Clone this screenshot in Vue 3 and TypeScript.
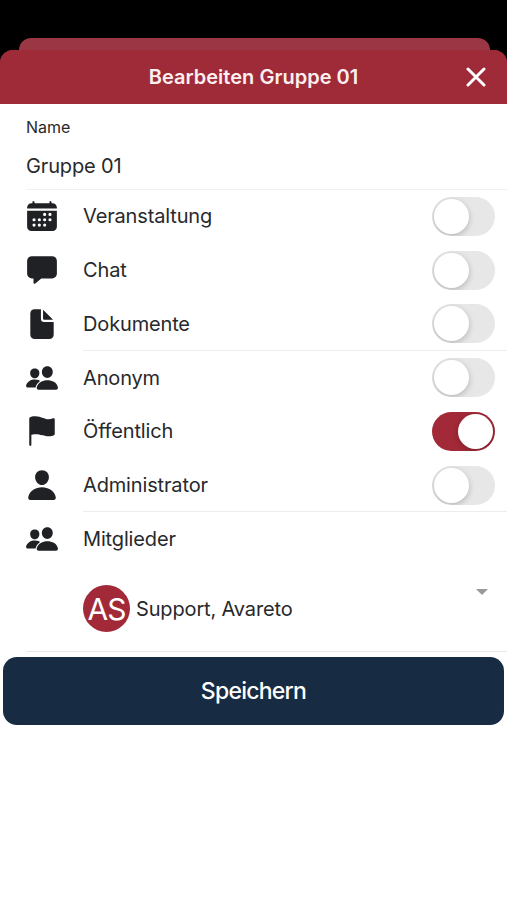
<script setup lang="ts">
import { ref } from 'vue'

type IconName = 'calendar' | 'chat' | 'document' | 'people' | 'flag' | 'person'

interface Option {
  label: string
  icon: IconName
  enabled: boolean
}

const icons: Record<IconName, string> = {
  calendar:
    'M480 128a64 64 0 00-64-64h-16V48.45c0-8.61-6.62-16-15.23-16.43A16 16 0 00368 48v16H144V48.45c0-8.61-6.62-16-15.23-16.43A16 16 0 00112 48v16H96a64 64 0 00-64 64v12a4 4 0 004 4h440a4 4 0 004-4zM32 416a64 64 0 0064 64h320a64 64 0 0064-64V179a3 3 0 00-3-3H35a3 3 0 00-3 3zM376 208a24 24 0 110 48 24 24 0 010-48zM376 288a24 24 0 110 48 24 24 0 010-48zM296 208a24 24 0 110 48 24 24 0 010-48zM296 288a24 24 0 110 48 24 24 0 010-48zM296 368a24 24 0 110 48 24 24 0 010-48zM216 288a24 24 0 110 48 24 24 0 010-48zM216 368a24 24 0 110 48 24 24 0 010-48zM136 288a24 24 0 110 48 24 24 0 010-48zM136 368a24 24 0 110 48 24 24 0 010-48z',
  chat: 'M408 48H104a72 72 0 00-72 72v192a72 72 0 0072 72h24v64a16 16 0 0026.25 12.29L245.74 384H408a72 72 0 0072-72V120a72 72 0 00-72-72z',
  document:
    'M428 224H288a48 48 0 01-48-48V36a4 4 0 00-4-4h-92a64 64 0 00-64 64v320a64 64 0 0064 64h224a64 64 0 0064-64V228a4 4 0 00-4-4zM419.22 188.59L275.41 44.78a2 2 0 00-3.41 1.41V176a16 16 0 0016 16h129.81a2 2 0 001.41-3.41z',
  people:
    'M336 256c-20.56 0-40.44-9.18-56-25.84-15.13-16.25-24.37-37.92-26-61-1.74-24.62 5.77-47.26 21.14-63.76S312 80 336 80c23.83 0 45.38 9.06 60.7 25.52 15.47 16.62 23 39.22 21.26 63.63-1.67 23.11-10.9 44.77-26 61C376.44 246.82 356.57 256 336 256zM467.83 432H204.18a27.71 27.71 0 01-22-10.67 30.22 30.22 0 01-5.26-25.79c8.42-33.81 29.28-61.85 60.32-81.08C264.79 297.4 299.86 288 336 288c36.85 0 71 9 98.71 26.05 31.11 19.13 52 47.33 60.38 81.55a30.27 30.27 0 01-5.32 25.78A27.68 27.68 0 01467.83 432zM147 260c-35.19 0-66.13-32.72-69-72.93-1.42-20.6 5-39.65 18-53.62 12.86-13.83 31-21.45 51-21.45s38 7.66 50.93 21.57c13.1 14.08 19.5 33.09 18 53.52-2.87 40.2-33.8 72.91-68.93 72.91zM212.66 291.45c-17.59-8.6-40.42-12.9-65.65-12.9-29.46 0-58.07 7.68-80.57 21.62-25.51 15.83-42.67 38.88-49.6 66.71a27.39 27.39 0 004.79 23.36A25.32 25.32 0 0041.72 400h111a8 8 0 007.87-6.57c.11-.63.25-1.26.41-1.88 8.48-34.06 28.35-62.84 57.71-83.82a8 8 0 00-.63-13.39c-1.57-.92-3.37-1.89-5.42-2.89z',
  flag: 'M80 480a16 16 0 01-16-16V68.13a24 24 0 0111.88-20.72C88 40.38 112.38 32 160 32c37.21 0 78.83 14.71 115.55 27.68C305.12 70.13 333.05 80 352 80a183.84 183.84 0 0071-14.5 18 18 0 0125 16.58v219.36a20 20 0 01-12 18.31c-8.71 3.81-40.51 16.25-84 16.25-24.14 0-54.38-7.14-86.39-14.71C229.63 312.79 192.43 304 160 304c-36.87 0-55.74 5.58-64 9.11V464a16 16 0 01-16 16z',
  person:
    'M332.64 64.58C313.18 43.57 286 32 256 32c-30.16 0-57.43 11.5-76.8 32.38-19.58 21.11-29.12 49.8-26.88 80.78C156.76 206.28 203.27 256 256 256s99.16-49.71 103.67-110.82c2.27-30.7-7.33-59.33-27.03-80.6zM432 480H80a31 31 0 01-24.2-11.13c-6.5-7.77-9.12-18.38-7.18-29.11C57.06 392.94 83.4 353.61 124.8 326c36.78-24.51 83.37-38 131.2-38s94.42 13.5 131.2 38c41.4 27.6 67.74 66.93 76.18 113.75 1.94 10.73-.68 21.34-7.18 29.11A31 31 0 01432 480z',
}

const groupName = ref('Gruppe 01')

const sections = ref<Option[][]>([
  [
    { label: 'Veranstaltung', icon: 'calendar', enabled: false },
    { label: 'Chat', icon: 'chat', enabled: false },
    { label: 'Dokumente', icon: 'document', enabled: false },
  ],
  [
    { label: 'Anonym', icon: 'people', enabled: false },
    { label: 'Öffentlich', icon: 'flag', enabled: true },
    { label: 'Administrator', icon: 'person', enabled: false },
  ],
])
</script>

<template>
  <div class="screen">
    <div class="sheet-behind"></div>
    <main class="sheet">
      <header class="toolbar">
        <h1 class="title">Bearbeiten Gruppe 01</h1>
        <button class="close" type="button">
          <svg viewBox="0 0 20 20"><path d="M2 2L18 18M18 2L2 18" /></svg>
        </button>
      </header>

      <label class="name">
        <span class="name-label">Name</span>
        <span class="name-value">{{ groupName }}</span>
      </label>

      <section v-for="(section, i) in sections" :key="i" class="section">
        <div v-for="option in section" :key="option.label" class="row">
          <svg class="icon" viewBox="0 0 512 512">
            <path fill-rule="evenodd" :d="icons[option.icon]" />
          </svg>
          <span class="label">{{ option.label }}</span>
          <button
            type="button"
            role="switch"
            class="toggle"
            :class="{ on: option.enabled }"
            :aria-checked="option.enabled"
            @click="option.enabled = !option.enabled"
          >
            <span class="knob"></span>
          </button>
        </div>
      </section>

      <section class="members">
        <div class="row">
          <svg class="icon" viewBox="0 0 512 512"><path :d="icons.people" /></svg>
          <span class="label">Mitglieder</span>
        </div>
        <div class="member">
          <span class="avatar">AS</span>
          <span class="member-name">Support, Avareto</span>
          <span class="caret"></span>
        </div>
      </section>

      <button class="save" type="button">Speichern</button>
    </main>
  </div>
</template>

<style>
body {
  margin: 0;
  background: #000;
}
</style>

<style scoped>
.screen {
  box-sizing: border-box;
  display: flex;
  flex-direction: column;
  height: 900px;
  padding-top: 38px;
  overflow: hidden;
  background: #000;
  color: #27292c;
  font-family: Inter, 'Liberation Sans', sans-serif;
  font-size: 20px;
  letter-spacing: -0.15px;
}
button {
  padding: 0;
  border: 0;
  font-family: inherit;
}
.sheet-behind {
  flex: none;
  height: 12px;
  margin: 0 17.5px 0 18.5px;
  border-radius: 12px 12px 0 0;
  background: #9b3644;
}
.sheet {
  flex: 1;
  display: flex;
  flex-direction: column;
  border-radius: 13px 13px 0 0;
  background: linear-gradient(#9f2a38 50px, #fff 50px);
  overflow: hidden;
}
.toolbar {
  flex: none;
  display: grid;
  grid-template-columns: 61px 1fr 61px;
  align-items: center;
  height: 53.5px;
  background: #9f2a38;
}
.title {
  grid-column: 2;
  margin: 0;
  text-align: center;
  color: #fbeff0;
  font-size: 20px;
  font-weight: 600;
  letter-spacing: 0.02px;
}
.close {
  display: flex;
  justify-content: center;
  padding-right: 1px;
  background: none;
}
.close svg {
  width: 20px;
  height: 20px;
  fill: none;
  stroke: #fff;
  stroke-width: 3;
  stroke-linecap: round;
}
.name {
  box-sizing: border-box;
  flex: none;
  display: flex;
  flex-direction: column;
  height: 86px;
  margin-left: 26px;
  padding-top: 13px;
  border-bottom: 1.5px solid #f0f0f0;
}
.name-label {
  font-size: 16px;
  line-height: 20px;
  letter-spacing: 0;
}
.name-value {
  margin-top: 16px;
  line-height: 26px;
}
.section,
.members {
  flex: none;
  display: flex;
  flex-direction: column;
}
.row {
  box-sizing: border-box;
  display: grid;
  grid-template-columns: 34px 1fr 63px;
  column-gap: 24px;
  align-items: center;
  height: 53.75px;
  padding: 0 12px 0 25px;
}
.section .row:last-child {
  background: linear-gradient(#ededed, #ededed) 83px 100% / 100% 1px no-repeat;
}
.icon {
  width: 34px;
  height: 34px;
  fill: #1f2124;
}
.toggle {
  box-sizing: border-box;
  display: flex;
  width: 63px;
  height: 39px;
  padding: 2px;
  border-radius: 20px;
  background: #e7e7e7;
  overflow: hidden;
}
.toggle.on {
  justify-content: flex-end;
  background: #a22938;
}
.knob {
  width: 35px;
  height: 35px;
  border-radius: 50%;
  background: #fff;
  box-shadow: 0 2px 6px rgba(0, 0, 0, 0.22);
}
.members {
  height: 139.5px;
}
.member {
  flex: 1;
  display: flex;
  align-items: center;
  margin-left: 26px;
  padding: 1px 19px 0 57px;
  border-bottom: 1px solid #e8e8e8;
}
.avatar {
  display: grid;
  place-items: center;
  width: 47px;
  height: 47px;
  border-radius: 50%;
  background: #a22938;
  color: #fff;
  font-size: 30px;
  letter-spacing: -1px;
}
.member-name {
  flex: 1;
  margin-left: 6px;
}
.caret {
  margin-bottom: 34px;
  border: 6px solid transparent;
  border-top-color: #999;
  border-bottom: 0;
}
.save {
  flex: none;
  height: 68px;
  margin: 5.5px 3px 0;
  border-radius: 14px;
  background: #172b42;
  color: #fff;
  font-size: 23px;
  font-weight: 500;
  letter-spacing: -0.75px;
}
</style>
